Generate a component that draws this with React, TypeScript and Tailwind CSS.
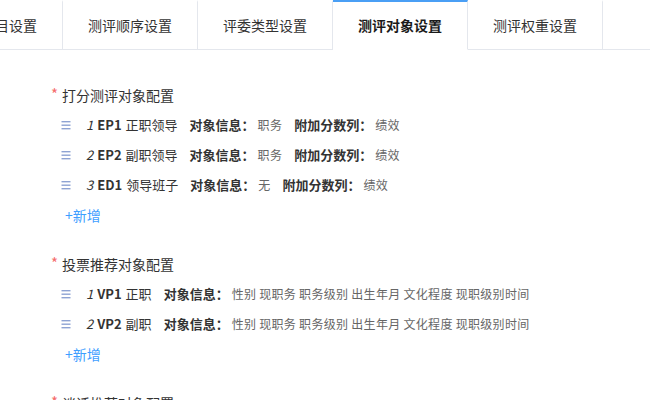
import React from "react";

const tabs = ["测评项目设置", "测评顺序设置", "评委类型设置", "测评对象设置", "测评权重设置"];
const activeTab = "测评对象设置";

type Row = {
    no: number;
    code: string;
    name: string;
    info: string;
    extra?: string;
};

const scoreRows: Row[] = [
    { no: 1, code: "EP1", name: "正职领导", info: "职务", extra: "绩效" },
    { no: 2, code: "EP2", name: "副职领导", info: "职务", extra: "绩效" },
    { no: 3, code: "ED1", name: "领导班子", info: "无", extra: "绩效" },
];

const voteRows: Row[] = [
    { no: 1, code: "VP1", name: "正职", info: "性别 现职务 职务级别 出生年月 文化程度 现职级别时间" },
    { no: 2, code: "VP2", name: "副职", info: "性别 现职务 职务级别 出生年月 文化程度 现职级别时间" },
];

const DragIcon = () => (
    <svg width="10" height="10" viewBox="0 0 10 10" className="shrink-0 ml-[1px]">
        <rect x="0.5" y="1" width="9" height="1.4" fill="#8ea3d3" />
        <rect x="0.5" y="4.5" width="9" height="1.4" fill="#8ea3d3" />
        <rect x="0.5" y="8" width="9" height="1.4" fill="#8ea3d3" />
    </svg>
);

const SectionTitle = ({ title }: { title: string }) => (
    <div className="flex items-center h-[30px] pl-[51px] text-[14px] text-[#333]">
        <span className="w-[11px] text-[#f56c6c] text-[15px] leading-none -mt-[3px]">*</span>
        <span>{title}</span>
    </div>
);

const ObjectRow = ({ row }: { row: Row }) => (
    <div className="flex items-center h-[30px] pl-[60px] text-[13px] text-[#333] whitespace-nowrap">
        <DragIcon />
        <span className="ml-[15px] italic">{row.no}</span>
        <span className="ml-[4px] font-bold">{row.code}</span>
        <span className="ml-[4px]">{row.name}</span>
        <span className="ml-3 font-bold">对象信息：</span>
        <span className="ml-[3px] text-[12px] tracking-[0.3px] text-[#666]">{row.info}</span>
        {row.extra && (
            <>
                <span className="ml-3 font-bold">附加分数列：</span>
                <span className="ml-[3px] text-[12px] tracking-[0.3px] text-[#666]">{row.extra}</span>
            </>
        )}
    </div>
);

const AddButton = () => (
    <div className="flex items-center h-[30px] pl-[65px]">
        <button className="text-[14px] text-[#409eff]">+新增</button>
    </div>
);

const App = () => {
    return (
        <div
            className="w-[650px] h-[400px] overflow-hidden bg-white"
            style={{ fontFamily: '"Noto Sans CJK SC", "Liberation Sans", sans-serif' }}
        >
            {/* Tabs */}
            <div className="flex h-[50px]">
                {tabs.map((tab, i) => {
                    const active = tab === activeTab;
                    return (
                        <div
                            key={tab}
                            className={`shrink-0 w-[135px] flex items-center justify-center border-r border-r-[#e4e7ed] border-t-2 border-b ${
                                i === 0 ? "ml-[-72px]" : ""
                            } ${
                                active
                                    ? "border-t-[#4a9ff5] border-b-white text-[#1a1a1a] font-semibold"
                                    : "border-t-white border-b-[#e4e7ed] text-[#333]"
                            } text-[14px]`}
                        >
                            {tab}
                        </div>
                    );
                })}
                <div className="flex-1 border-b border-b-[#e4e7ed]" />
            </div>

            {/* Content */}
            <div className="pt-[30px]">
                <div className="mb-[19px]">
                    <SectionTitle title="打分测评对象配置" />
                    {scoreRows.map((row) => (
                        <ObjectRow key={row.code} row={row} />
                    ))}
                    <AddButton />
                </div>

                <div className="mb-[19px]">
                    <SectionTitle title="投票推荐对象配置" />
                    {voteRows.map((row) => (
                        <ObjectRow key={row.code} row={row} />
                    ))}
                    <AddButton />
                </div>

                <div>
                    <SectionTitle title="谈话推荐对象配置" />
                </div>
            </div>
        </div>
    );
};

export default App;
